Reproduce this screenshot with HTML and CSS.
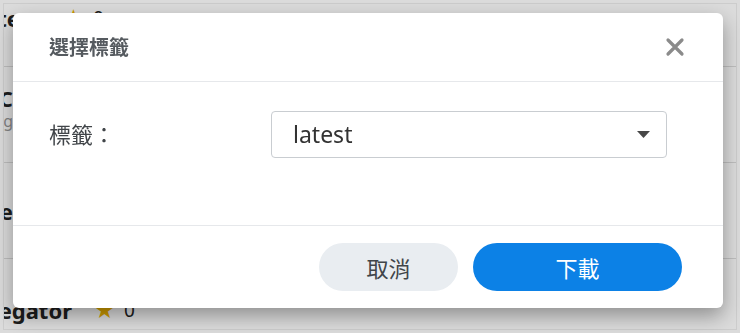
FILE: index.html
```html
<!DOCTYPE html>
<html lang="zh-Hant">
<head>
    <meta charset="UTF-8">
    <meta name="viewport" content="width=device-width, initial-scale=1.0">
    <title>選擇標籤</title>
    <link rel="stylesheet" href="styles.css">
</head>
<body>
    <div class="page">
        <div class="row row-a">
            <span class="name">registry-lite</span>
            <span class="star">★</span>
            <span class="count">0</span>
        </div>
        <div class="row row-b">
            <span class="name">calibre-LC</span>
            <span class="desc">image-eg</span>
        </div>
        <div class="row row-c">
            <span class="name">alpine-base</span>
        </div>
        <div class="row row-d">
            <span class="name">aggregator</span>
            <span class="star">★</span>
            <span class="count">0</span>
        </div>
    </div>

    <div class="mask"></div>

    <div class="dialog">
        <div class="dialog-head">
            <span class="title">選擇標籤</span>
            <button class="close">
                <svg width="20" height="20" viewBox="0 0 20 20">
                    <path d="M3 3 L17 17 M17 3 L3 17" stroke="#8b8b8b" stroke-width="3.2" stroke-linecap="round"/>
                </svg>
            </button>
        </div>
        <div class="dialog-body">
            <label class="field-label">標籤：</label>
            <div class="select">
                <span class="value">latest</span>
                <svg width="13" height="7" viewBox="0 0 13 7">
                    <path d="M0 0 H13 L6.5 7 Z" fill="#474747"/>
                </svg>
            </div>
        </div>
        <div class="dialog-foot">
            <button class="btn btn-cancel">取消</button>
            <button class="btn btn-primary">下載</button>
        </div>
    </div>
</body>
</html>
```

FILE: styles.css
```css
* {
    box-sizing: border-box;
}

body {
    margin: 0;
    width: 740px;
    height: 333px;
    overflow: hidden;
    background: #fff;
    font-family: "Noto Sans", "Noto Sans CJK TC", sans-serif;
}

/* background list behind the dialog */
.page {
    margin: 3px;
    height: 327px;
    border: 1px solid #eee;
    overflow: hidden;
    background: #fff;
}

.row {
    display: flex;
    align-items: flex-start;
    border-bottom: 1px solid #ddd;
    font-weight: 700;
    font-size: 22px;
    line-height: 26px;
    color: #222;
    white-space: nowrap;
}

.row .name {
    width: 150px;
    flex: none;
    text-align: right;
}

.row .star {
    color: #f0b400;
    font-size: 19px;
    margin-left: 23px;
}

.row .count {
    margin-left: 10px;
    font-weight: 400;
    font-size: 19px;
}

.row-a {
    height: 63px;
    padding-top: 1px;
}

.row-a .name {
    margin-left: -134px;
}

.row-a .star {
    margin-left: 44px;
}

.row-b {
    height: 96px;
    flex-direction: column;
    padding-top: 18px;
}

.row-b .name {
    margin-left: -141px;
}

.row-b .desc {
    margin-left: -91px;
    width: 100px;
    text-align: right;
    font-weight: 400;
    font-size: 16px;
    line-height: 20px;
    color: #999;
}

.row-c {
    height: 96px;
    padding-top: 35px;
}

.row-c .name {
    margin-left: -141px;
}

.row-d {
    height: 96px;
    padding-top: 38px;
}

.row-d .name {
    margin-left: -82px;
}

.mask {
    position: fixed;
    inset: 0;
    background: rgba(0, 0, 0, 0.14);
}

/* dialog */
.dialog {
    position: fixed;
    left: 13px;
    top: 13px;
    width: 710px;
    height: 295px;
    background: #fff;
    border-radius: 6px;
    box-shadow: 0 8px 20px rgba(0, 0, 0, 0.35);
    display: flex;
    flex-direction: column;
}

.dialog-head {
    height: 69px;
    flex: none;
    display: flex;
    align-items: center;
    justify-content: space-between;
    padding: 0 38px 0 36px;
    border-bottom: 1px solid #e6e8eb;
}

.title {
    font-size: 20px;
    font-weight: 700;
    color: #555a5f;
    margin-top: -2px;
}

.close {
    border: none;
    background: none;
    padding: 0;
    width: 20px;
    height: 20px;
    display: flex;
}

.dialog-body {
    flex: 1;
    display: flex;
    align-items: flex-start;
    padding: 29px 0 0 36px;
    border-bottom: 1px solid #e6e8eb;
}

.field-label {
    width: 222px;
    flex: none;
    line-height: 47px;
    font-size: 22px;
    color: #414549;
}

.select {
    width: 396px;
    height: 47px;
    border: 1px solid #c9cdd1;
    border-radius: 4px;
    display: flex;
    align-items: center;
    justify-content: space-between;
    padding: 0 16px 0 21px;
}

.value {
    font-size: 23px;
    color: #333;
    margin-top: -2px;
}

.dialog-foot {
    height: 82px;
    flex: none;
    display: flex;
    align-items: center;
    justify-content: flex-end;
    gap: 15px;
    padding-right: 41px;
}

.btn {
    height: 48px;
    border: none;
    border-radius: 24px;
    font-family: inherit;
    font-size: 22px;
}

.btn-cancel {
    width: 139px;
    background: #e9edf1;
    color: #414549;
}

.btn-primary {
    width: 209px;
    background: #0c81e6;
    color: #fff;
}
```
